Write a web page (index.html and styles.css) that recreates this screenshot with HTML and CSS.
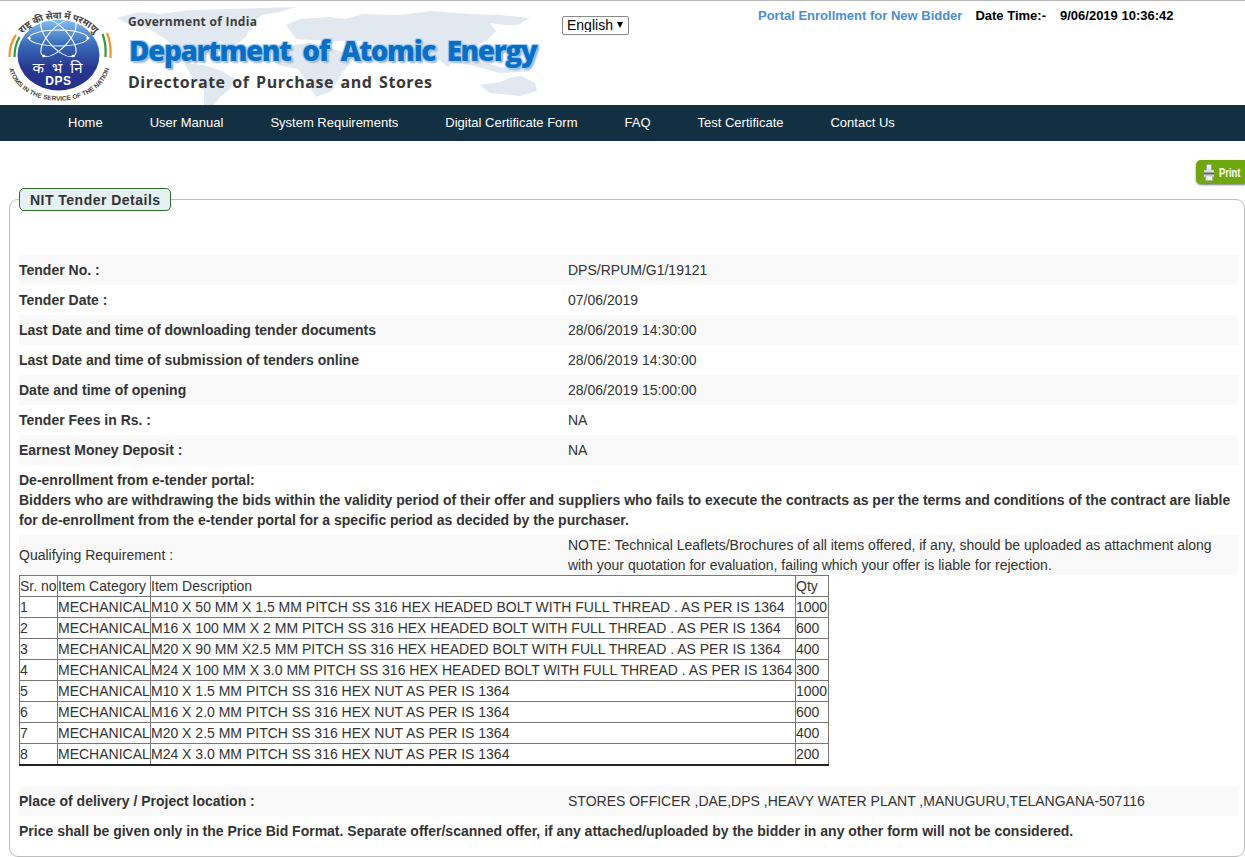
FILE: index.html
```html
<!DOCTYPE html>
<html lang="en">
<head>
<meta charset="utf-8">
<title>NIT Tender Details</title>
<link rel="stylesheet" href="styles.css">
</head>
<body>
<header class="masthead">
  <svg class="worldmap" viewBox="0 0 560 104" width="560" height="104" aria-hidden="true">
    <g fill="#e1e8f0">
      <path d="M116 17 L140 11 L160 13 L190 9 L230 8 L296 6 L280 11 L262 14 L252 22 L246 36 L232 46 L214 52 L200 56 L190 62 L180 54 L168 40 L150 28 L126 22Z"/>
      <path d="M184 62 L204 64 L222 70 L235 78 L230 88 L220 96 L214 104 L204 104 L204 90 L192 76Z"/>
      <path d="M286 24 L300 18 L330 16 L345 18 L363 13 L400 14 L430 10 L470 13 L500 14 L530 17 L518 24 L505 24 L490 22 L496 30 L486 40 L470 48 L456 56 L448 66 L438 58 L424 50 L404 52 L386 46 L360 40 L330 40 L296 38Z"/>
      <path d="M278 46 L310 42 L340 50 L352 60 L342 72 L332 90 L316 96 L306 80 L298 68 L278 64 L272 54Z"/>
      <path d="M448 60 L470 64 L500 72 L536 70 L500 66 L470 58Z"/>
      <path d="M480 84 L500 81 L512 76 L522 75 L535 82 L537 90 L520 95 L490 92Z"/>
    </g>
  </svg>
  <svg class="logo" viewBox="0 0 106 96" width="106" height="96" role="img" aria-label="DPS">
    <defs>
      <linearGradient id="globe" x1="0" y1="0" x2="0" y2="1">
        <stop offset="0" stop-color="#84bfee"/>
        <stop offset=".35" stop-color="#3a6cba"/>
        <stop offset=".68" stop-color="#28378f"/>
        <stop offset="1" stop-color="#262f88"/>
      </linearGradient>
      <path id="arcTop" d="M7 47 A44 36 0 0 1 96 47"/>
      <path id="arcBottom" d="M1 54 A50 38 0 0 0 103 54"/>
    </defs>
    <ellipse cx="51.500" cy="47" rx="41" ry="35.500" fill="url(#globe)"/>
    <g transform="translate(51.500 30) scale(1.4 1)">
      <g fill="none" stroke="#fff" stroke-width=".8">
        <ellipse rx="21" ry="8"/>
        <ellipse rx="21" ry="8" transform="rotate(60)"/>
        <ellipse rx="21" ry="8" transform="rotate(120)"/>
      </g>
      <g fill="#fff">
        <circle cx="-21" r="1.200"/><circle cx="21" r="1.200"/>
        <circle cx="-10.500" cy="18" r="1.200"/><circle cx="10.500" cy="18" r="1.200"/>
        <circle cx="-10.500" cy="-18" r="1.200"/><circle cx="10.500" cy="-18" r="1.200"/>
      </g>
    </g>
    <g fill="none" stroke-width="2.200">
      <path d="M2.500 49 C2.500 41 4.500 33 9 27" stroke="#f0922e"/>
      <path d="M7.500 49 C7.500 42 9 35 12.500 29" stroke="#2e9a3c"/>
      <path d="M95.500 26 C98 32 99 40 98.500 49" stroke="#2e9a3c"/>
      <path d="M100 25 C103 32 104 41 103.500 50" stroke="#f0922e"/>
    </g>
    <text class="logo-hindi"><textPath href="#arcTop" startOffset="50%" text-anchor="middle">राष्ट्र की सेवा में परमाणु</textPath></text>
    <text class="logo-motto"><textPath href="#arcBottom" startOffset="50%" text-anchor="middle">ATOMS IN THE SERVICE OF THE NATION</textPath></text>
    <text class="logo-deva" x="51.500" y="65" text-anchor="middle">क भं नि</text>
    <text class="logo-dps" x="51.500" y="77" text-anchor="middle">DPS</text>
  </svg>
  <div class="org">
    <div class="org-gov">Government of India</div>
    <div class="org-dept">Department of Atomic Energy</div>
    <div class="org-dir">Directorate of Purchase and Stores</div>
  </div>
  <div class="lang"><select class="lang-select"><option>English</option></select></div>
  <div class="topinfo">
    <a class="enroll" href="#">Portal Enrollment for New Bidder</a>
    <span class="dt-label">Date Time:-</span>
    <span class="dt-value">9/06/2019 10:36:42</span>
  </div>
</header>

<nav class="mainnav">
  <a href="#">Home</a>
  <a href="#">User Manual</a>
  <a href="#">System Requirements</a>
  <a href="#">Digital Certificate Form</a>
  <a href="#">FAQ</a>
  <a href="#">Test Certificate</a>
  <a href="#">Contact Us</a>
</nav>

<div class="printbar">
  <button class="printbtn" type="button">
    <svg class="printicon" viewBox="0 0 10 17" width="10" height="17" aria-hidden="true">
      <rect x="2.500" y=".5" width="5" height="5.500" fill="#eef0f0" stroke="#8f9a9c" stroke-width=".6"/>
      <rect x="0" y="6" width="10" height="7" rx="1" fill="#d9dddd"/>
      <rect x="0" y="8.500" width="10" height="2" fill="#5f676a"/>
      <rect x="1.500" y="12" width="7" height="4.500" fill="#f7f7f7" stroke="#9aa5a7" stroke-width=".6"/>
    </svg>
    <span class="printlabel">Print</span>
  </button>
</div>

<fieldset class="panel">
  <legend class="panel-title">NIT Tender Details</legend>
  <div class="rows">
    <div class="row"><b>Tender No. :</b><span>DPS/RPUM/G1/19121</span></div>
    <div class="row"><b>Tender Date :</b><span>07/06/2019</span></div>
    <div class="row"><b>Last Date and time of downloading tender documents</b><span>28/06/2019 14:30:00</span></div>
    <div class="row"><b>Last Date and time of submission of tenders online</b><span>28/06/2019 14:30:00</span></div>
    <div class="row"><b>Date and time of opening</b><span>28/06/2019 15:00:00</span></div>
    <div class="row"><b>Tender Fees in Rs. :</b><span>NA</span></div>
    <div class="row"><b>Earnest Money Deposit :</b><span>NA</span></div>
  </div>
  <p class="notice"><b>De-enrollment from e-tender portal:<br>Bidders who are withdrawing the bids within the validity period of their offer and suppliers who fails to execute the contracts as per the terms and conditions of the contract are liable for de-enrollment from the e-tender portal for a specific period as decided by the purchaser.</b></p>
  <div class="row row-shaded row-qual"><span>Qualifying Requirement :</span><span>NOTE: Technical Leaflets/Brochures of all items offered, if any, should be uploaded as attachment along with your quotation for evaluation, failing which your offer is liable for rejection.</span></div>
  <table class="items">
    <thead>
      <tr><td>Sr. no</td><td>Item Category</td><td>Item Description</td><td>Qty</td></tr>
    </thead>
    <tbody>
      <tr><td>1</td><td>MECHANICAL</td><td>M10 X 50 MM X 1.5 MM PITCH SS 316 HEX HEADED BOLT WITH FULL THREAD . AS PER IS 1364</td><td>1000</td></tr>
      <tr><td>2</td><td>MECHANICAL</td><td>M16 X 100 MM X 2 MM PITCH SS 316 HEX HEADED BOLT WITH FULL THREAD . AS PER IS 1364</td><td>600</td></tr>
      <tr><td>3</td><td>MECHANICAL</td><td>M20 X 90 MM X2.5 MM PITCH SS 316 HEX HEADED BOLT WITH FULL THREAD . AS PER IS 1364</td><td>400</td></tr>
      <tr><td>4</td><td>MECHANICAL</td><td>M24 X 100 MM X 3.0 MM PITCH SS 316 HEX HEADED BOLT WITH FULL THREAD . AS PER IS 1364</td><td>300</td></tr>
      <tr><td>5</td><td>MECHANICAL</td><td>M10 X 1.5 MM PITCH SS 316 HEX NUT AS PER IS 1364</td><td>1000</td></tr>
      <tr><td>6</td><td>MECHANICAL</td><td>M16 X 2.0 MM PITCH SS 316 HEX NUT AS PER IS 1364</td><td>600</td></tr>
      <tr><td>7</td><td>MECHANICAL</td><td>M20 X 2.5 MM PITCH SS 316 HEX NUT AS PER IS 1364</td><td>400</td></tr>
      <tr><td>8</td><td>MECHANICAL</td><td>M24 X 3.0 MM PITCH SS 316 HEX NUT AS PER IS 1364</td><td>200</td></tr>
    </tbody>
  </table>
  <div class="row row-shaded row-place"><b>Place of delivery / Project location :</b><span>STORES OFFICER ,DAE,DPS ,HEAVY WATER PLANT ,MANUGURU,TELANGANA-507116</span></div>
  <p class="closing"><b>Price shall be given only in the Price Bid Format. Separate offer/scanned offer, if any attached/uploaded by the bidder in any other form will not be considered.</b></p>
</fieldset>
</body>
</html>
```
FILE: styles.css
```css
* { box-sizing: border-box; }
html, body { margin: 0; padding: 0; }
body {
  font-family: "Liberation Sans", Arial, sans-serif;
  font-size: 14px;
  line-height: 20px;
  color: #333;
  background: #fff;
  overflow: hidden;
}
.masthead {
  position: relative;
  display: flex;
  align-items: flex-start;
  height: 105px;
  border-top: 1px solid #b8b8b8;
  overflow: hidden;
}
.worldmap { position: absolute; left: 0; top: 0; }
.logo { position: relative; flex: none; margin: 7px 0 0 7px; }
.logo-hindi { font: 700 9.500px "Noto Sans CJK SC", "Noto Sans", sans-serif; fill: #444; }
.logo-motto { font: 700 6.500px "Liberation Sans", sans-serif; fill: #444; }
.logo-deva { font: 400 15px "Noto Sans", sans-serif; fill: #fff; letter-spacing: 2px; }
.logo-dps { font: 700 12px "Liberation Sans", sans-serif; fill: #fff; letter-spacing: .6px; }
.org { position: relative; flex: none; width: 434px; margin-left: 15px; }
.org-gov {
  margin-top: 12px;
  font: 700 12px/18px "Open Sans", sans-serif;
  color: #3c3c3c;
  letter-spacing: .27px;
}
.org-dept {
  margin: 0 0 0 1px;
  font: 800 28px/38px "Open Sans", sans-serif;
  color: #0a6fc4;
  letter-spacing: -1.480px;
  word-spacing: 6px;
  white-space: nowrap;
  text-shadow: -1px -1px 0 #a9d0f0, 1px -1px 0 #a9d0f0, -1px 1px 0 #a9d0f0, 1px 1px 0 #8fbde6, 2px 2px 2px #9fb2c6;
}
.org-dir {
  margin-top: 2px;
  font: 700 16px/22px "Open Sans", sans-serif;
  color: #383838;
  letter-spacing: .52px;
  word-spacing: 2px;
  white-space: nowrap;
}
.lang { position: relative; flex: none; margin: 15px 0 0 0; }
.lang::after {
  content: "";
  position: absolute;
  right: 6px;
  top: 6px;
  border-style: solid;
  border-width: 6px 3px 0;
  border-color: #000 transparent transparent;
  pointer-events: none;
}
.lang-select {
  display: block;
  width: 67px;
  height: 19px;
  padding: 0 0 2px 4px;
  font: 14px "Liberation Sans", sans-serif;
  color: #000;
  background: #fff;
  border: 1px solid #8a8a8a;
  border-radius: 2px;
  appearance: none;
  -webkit-appearance: none;
}
.topinfo {
  position: relative;
  flex: none;
  display: flex;
  margin: 5px 0 0 129px;
  font-size: 13px;
  line-height: 20px;
  font-weight: 700;
  color: #000;
  white-space: nowrap;
}
.enroll { color: #4a8fd0; text-decoration: none; }
.dt-label { margin-left: 13px; }
.dt-value { margin-left: 14px; }
.mainnav {
  display: flex;
  gap: 47px;
  height: 36px;
  padding-left: 68px;
  background: #132f42;
  line-height: 35px;
  font-size: 13px;
}
.mainnav a { color: #fff; text-decoration: none; }
.printbar { display: flex; justify-content: flex-end; height: 47px; padding-top: 19px; }
.printbtn {
  display: flex;
  align-items: center;
  gap: 5px;
  width: 49px;
  height: 24px;
  padding: 0 0 0 8px;
  border: 0;
  border-radius: 5px 0 0 5px;
  background: #6ea80e;
  box-shadow: 0 1px 2px #777;
  color: #fff;
  font: 700 13px "Liberation Sans", sans-serif;
}
.printicon { flex: none; }
.printlabel {
  flex: none;
  display: inline-block;
  width: 21px;
  overflow: visible;
  transform: scaleX(.72);
  transform-origin: left center;
}
.panel {
  display: block;
  min-width: 0;
  height: 669px;
  margin: 0 0 0 9px;
  padding: 0 6px 0 9px;
  border: 1px solid #bdbdbd;
  border-radius: 9px;
}
.panel-title {
  height: 23px;
  margin: 0 13px 0 0;
  padding: 0 10px;
  width: 152px;
  border: 1px solid #2f6f2f;
  border-radius: 5px;
  background: #e4f0f2;
  font-weight: 700;
  line-height: 22px;
  white-space: nowrap;
  letter-spacing: .48px;
}
.rows { margin-top: 44px; }
.row {
  display: grid;
  grid-template-columns: 549px 1fr;
  padding: 5px 0;
}
.rows .row:nth-child(odd), .row-shaded { background: #f9f9f9; }
.notice { margin: 5px 0; font-size: 14px; }
.row-qual { align-items: center; padding: 0; }
.items {
  width: 809px;
  table-layout: fixed;
  border-collapse: collapse;
  border: 1px solid #222;
  border-bottom-width: 2px;
  line-height: 20px;
}
.items td {
  height: 21px;
  padding: 0;
  border: 1px solid #777;
  white-space: nowrap;
}
.items td:nth-child(1) { width: 38px; }
.items td:nth-child(2) { width: 93px; }
.items td:nth-child(3) { width: 645px; }
.items td:nth-child(4) { width: 33px; }
.row-place { margin-top: 20px; }
.closing { margin: 5px 0 0; }
```
